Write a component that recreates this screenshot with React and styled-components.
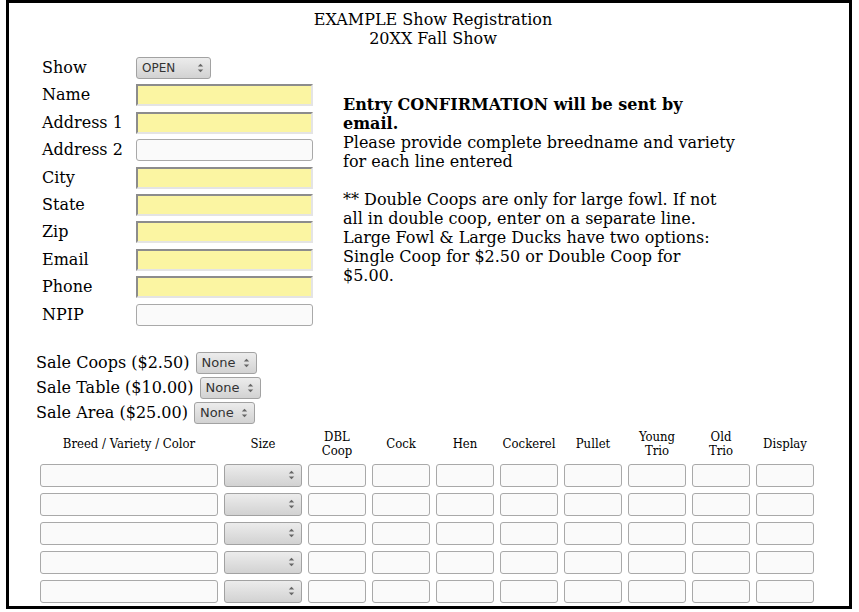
import React from "react";
import styled, { createGlobalStyle } from "styled-components";

const GlobalStyle = createGlobalStyle`
  body {
    margin: 0;
    background: #fff;
    font-family: "DejaVu Serif", "Liberation Serif", serif;
    color: #000;
  }
`;

const Frame = styled.div`
  box-sizing: border-box;
  width: 846px;
  height: 609px;
  margin: 0 6px;
  border: 3px solid #000;
  overflow: hidden;
`;

const Title = styled.div`
  text-align: center;
  font-size: 16px;
  line-height: 19px;
  padding-top: 7px;
  padding-left: 8px;
`;

const Top = styled.div`
  display: flex;
  padding-left: 33px;
  margin-top: 9px;
`;

const FieldGrid = styled.div`
  display: grid;
  grid-template-columns: 94px 177px;
  grid-auto-rows: 22px;
  row-gap: 5.4px;
  align-items: center;
`;

const Label = styled.label`
  font-size: 16px;
  line-height: 22px;
  white-space: nowrap;
`;

const TextInput = styled.input`
  box-sizing: border-box;
  width: ${(p) => p.$width || "177px"};
  height: ${(p) => p.$height || "22px"};
  margin: 0;
  padding: 0 4px;
  font: 13px "DejaVu Sans", sans-serif;
  ${(p) =>
    p.$required
      ? `
    background: #fbf5a2;
    border: 2px solid;
    border-color: #8c8c8c #e4e4e4 #e4e4e4 #8c8c8c;
    border-radius: 0;
  `
      : `
    background: #fafafa;
    border: 1px solid #a9a9a9;
    border-radius: 3px;
  `}
`;

const SelectWrap = styled.div`
  position: relative;
  display: inline-block;
  width: ${(p) => p.$width};
  height: ${(p) => p.$height || "22px"};
`;

const Select = styled.select`
  box-sizing: border-box;
  appearance: none;
  -webkit-appearance: none;
  width: 100%;
  height: 100%;
  margin: 0;
  padding: 0 0 0 5px;
  border: 1px solid #a2a2a2;
  border-radius: 3px;
  background: linear-gradient(#ececec, #d2d2d2);
  color: #333;
  font: ${(p) => p.$fontSize || "13px"} "DejaVu Sans", "Liberation Sans", sans-serif;
  outline: none;
`;

const Arrows = styled.svg`
  position: absolute;
  right: 7px;
  top: 50%;
  margin-top: -5px;
  pointer-events: none;
`;

function Dropdown({ width, height, value, fontSize }) {
  return (
    <SelectWrap $width={width} $height={height}>
      <Select $fontSize={fontSize} defaultValue={value}>
        <option>{value}</option>
      </Select>
      <Arrows width="7" height="10" viewBox="0 0 7 10">
        <path d="M3.5 0.8 L6.2 3.6 L0.8 3.6 Z" fill="#666" />
        <path d="M3.5 9.2 L6.2 6.4 L0.8 6.4 Z" fill="#666" />
      </Arrows>
    </SelectWrap>
  );
}

const Notice = styled.div`
  margin-left: 30px;
  margin-top: 38px;
  width: 400px;
  font-size: 16px;
  line-height: 19px;
`;

const Strong = styled.div`
  font-weight: bold;
  width: 380px;
`;

const Para = styled.p`
  margin: 0 0 19px;
`;

const SaleList = styled.div`
  padding-left: 27px;
  margin-top: 26px;
  display: flex;
  flex-direction: column;
  gap: 3px;
`;

const SaleRow = styled.div`
  display: flex;
  align-items: center;
  gap: 6px;
  height: 22px;
  font-size: 16px;
`;

const EntryGrid = styled.div`
  display: grid;
  grid-template-columns: 178px 78px repeat(8, 58px);
  column-gap: 6px;
  row-gap: 6px;
  padding-left: 31px;
  margin-top: 5px;
`;

const Head = styled.div`
  height: 30px;
  display: flex;
  align-items: center;
  justify-content: center;
  text-align: center;
  font-family: "DejaVu Serif Condensed", "DejaVu Serif", serif;
  font-stretch: condensed;
  font-size: 13px;
  line-height: 14px;
  margin-bottom: -1px;
`;

const fields = [
  { label: "Name", required: true },
  { label: "Address 1", required: true },
  { label: "Address 2" },
  { label: "City", required: true },
  { label: "State", required: true },
  { label: "Zip", required: true },
  { label: "Email", required: true },
  { label: "Phone", required: true },
  { label: "NPIP" },
];

const sales = [
  { label: "Sale Coops ($2.50)", width: "61px" },
  { label: "Sale Table ($10.00)", width: "61px" },
  { label: "Sale Area ($25.00)", width: "61px" },
];

const heads = [
  ["Breed / Variety / Color"],
  ["Size"],
  ["DBL", "Coop"],
  ["Cock"],
  ["Hen"],
  ["Cockerel"],
  ["Pullet"],
  ["Young", "Trio"],
  ["Old", "Trio"],
  ["Display"],
];

const doubleCoopLines = [
  "** Double Coops are only for large fowl. If not",
  "all in double coop, enter on a separate line.",
  "Large Fowl & Large Ducks have two options:",
  "Single Coop for $2.50 or Double Coop for",
  "$5.00.",
];

export default function App() {
  const rows = [0, 1, 2, 3, 4];
  return (
    <>
      <GlobalStyle />
      <Frame>
        <Title>
          EXAMPLE Show Registration
          <br />
          20XX Fall Show
        </Title>

        <Top>
          <FieldGrid>
            <Label>Show</Label>
            <Dropdown width="75px" height="22px" value="OPEN" fontSize="12px" />
            {fields.map((f) => (
              <React.Fragment key={f.label}>
                <Label>{f.label}</Label>
                <TextInput $required={f.required} />
              </React.Fragment>
            ))}
          </FieldGrid>

          <Notice>
            <Strong>Entry CONFIRMATION will be sent by email.</Strong>
            <Para>
              Please provide complete breedname and variety
              <br />
              for each line entered
            </Para>
            <div>
              {doubleCoopLines.map((line, i) => (
                <React.Fragment key={i}>
                  {i > 0 && <br />}
                  {line}
                </React.Fragment>
              ))}
            </div>
          </Notice>
        </Top>

        <SaleList>
          {sales.map((s) => (
            <SaleRow key={s.label}>
              <span>{s.label}</span>
              <Dropdown width={s.width} value="None" />
            </SaleRow>
          ))}
        </SaleList>

        <EntryGrid>
          {heads.map((h) => (
            <Head key={h.join(" ")}>
              {h.map((line, i) => (
                <React.Fragment key={line}>
                  {i > 0 && <br />}
                  {line}
                </React.Fragment>
              ))}
            </Head>
          ))}
          {rows.map((r) => (
            <React.Fragment key={r}>
              <TextInput $width="178px" $height="23px" />
              <Dropdown width="78px" height="23px" value="" />
              {Array.from({ length: 8 }).map((_, c) => (
                <TextInput key={c} $width="58px" $height="23px" />
              ))}
            </React.Fragment>
          ))}
        </EntryGrid>
      </Frame>
    </>
  );
}
